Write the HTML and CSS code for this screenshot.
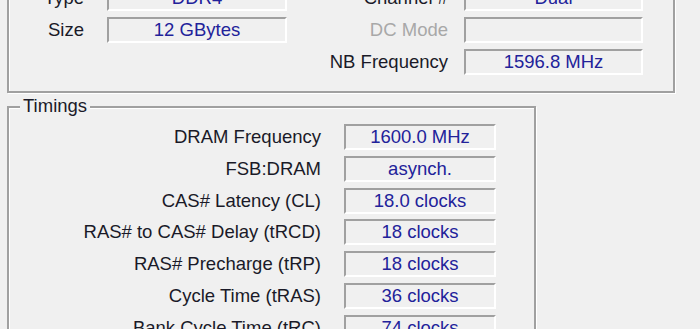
FILE: index.html
```html
<!DOCTYPE html>
<html lang="en">
<head>
  <meta charset="UTF-8">
  <title>CPU-Z Memory</title>
  <link rel="stylesheet" href="styles.css">
</head>
<body>
  <div class="window">
    <div class="group general">
      <div class="grid">
        <div class="label">Type</div>
        <div class="field">DDR4</div>
        <div class="label wide">Channel #</div>
        <div class="field">Dual</div>

        <div class="label">Size</div>
        <div class="field">12 GBytes</div>
        <div class="label wide disabled">DC Mode</div>
        <div class="field"></div>

        <div></div>
        <div></div>
        <div class="label wide">NB Frequency</div>
        <div class="field">1596.8 MHz</div>
      </div>
    </div>

    <div class="group timings">
      <span class="legend">Timings</span>
      <div class="grid">
        <div class="label">DRAM Frequency</div>
        <div class="field">1600.0 MHz</div>
        <div class="label">FSB:DRAM</div>
        <div class="field">asynch.</div>
        <div class="label">CAS# Latency (CL)</div>
        <div class="field">18.0 clocks</div>
        <div class="label">RAS# to CAS# Delay (tRCD)</div>
        <div class="field">18 clocks</div>
        <div class="label">RAS# Precharge (tRP)</div>
        <div class="field">18 clocks</div>
        <div class="label">Cycle Time (tRAS)</div>
        <div class="field">36 clocks</div>
        <div class="label">Bank Cycle Time (tRC)</div>
        <div class="field">74 clocks</div>
      </div>
    </div>
  </div>
</body>
</html>
```

FILE: styles.css
```css
* {
  margin: 0;
  padding: 0;
  box-sizing: border-box;
}

body {
  background-color: #f0f0f0;
  font-family: 'Liberation Sans', Arial, sans-serif;
  font-size: 18.5px;
  color: #1a1a28;
  overflow: hidden;
  height: 329px;
}

.window {
  margin-top: -31px;
  padding-left: 7px;
}

/* etched group box */
.group {
  position: relative;
  border: 2px solid #a0a0a0;
  box-shadow: 1px 1px 0 #fff, inset 1px 1px 0 #fff;
}

.general {
  width: 668px;
  padding: 14px 30px 16px 0;
}

.general .grid {
  display: grid;
  grid-template-columns: 98px 180px 177px 179px;
  grid-auto-rows: 26px;
  row-gap: 6px;
}

.general .wide {
  padding-right: 16px;
}

.timings {
  width: 529px;
  margin-top: 13px;
  padding: 16px 39px 20px 0;
}

.timings .grid {
  display: grid;
  grid-template-columns: 335px 152px;
  grid-auto-rows: 26px;
  row-gap: 5.8px;
}

.legend {
  position: absolute;
  left: 11px;
  top: -12px;
  padding: 0 3px;
  background-color: #f0f0f0;
  line-height: 20px;
}

.label {
  text-align: right;
  padding-right: 23px;
  line-height: 26px;
  white-space: nowrap;
}

.label.disabled {
  color: #a8a8a8;
}

.field {
  border-top: 2px solid #a0a0a0;
  border-left: 2px solid #a0a0a0;
  border-bottom: 2px solid #fff;
  border-right: 2px solid #fff;
  background-color: #f0f0f0;
  color: #22229a;
  text-align: center;
  line-height: 22px;
  white-space: nowrap;
}
```
